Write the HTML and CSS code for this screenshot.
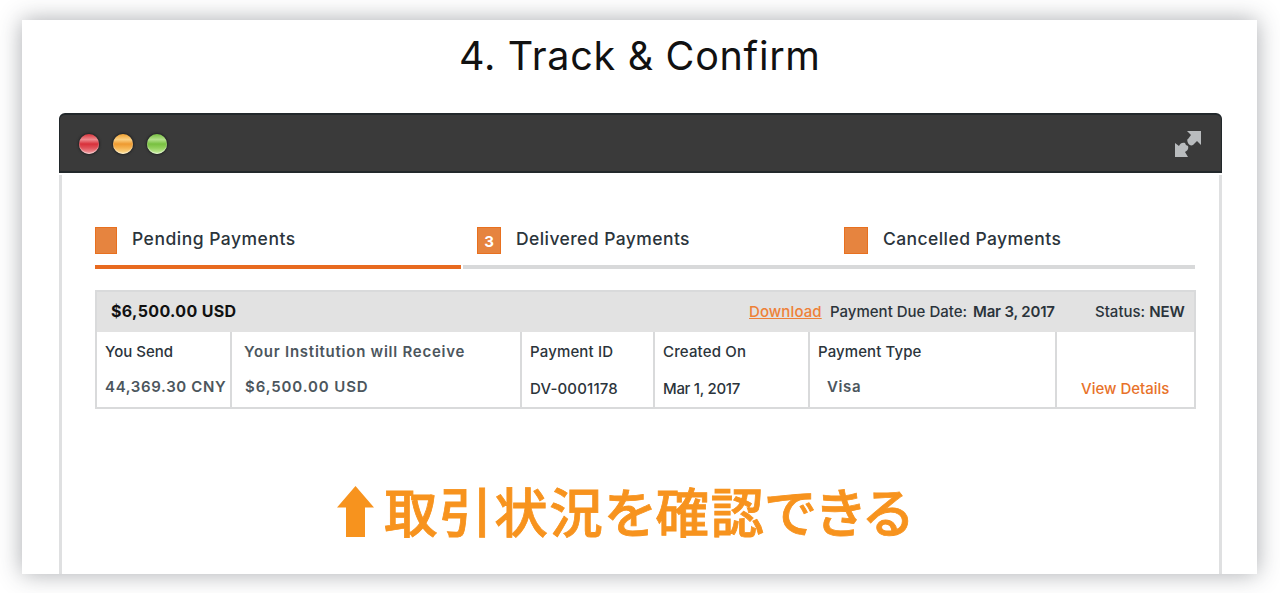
FILE: index.html
```html
<!DOCTYPE html>
<html lang="ja">

<head>
    <meta charset="UTF-8">
    <meta name="viewport" content="width=device-width, initial-scale=1.0">
    <title>Track &amp; Confirm</title>
    <link rel="stylesheet" href="styles.css">
</head>

<body>
    <div class="card">
        <h1 class="title">4. Track &amp; Confirm</h1>

        <div class="window">
            <!-- Title bar -->
            <div class="titlebar">
                <div class="lights">
                    <span class="light red"></span>
                    <span class="light yellow"></span>
                    <span class="light green"></span>
                </div>
                <svg class="expand" width="28" height="28" viewBox="0 0 28 28">
                    <path d="M13 1H27V15L23 11L19 15C17 16 15 15 14 13C13 11 13 9 14 9L17 5Z" />
                    <path d="M1 13L5 16C6 13 9 12 11 13L12 15L14 16C15 19 13 21 11 22L14 27H1Z" />
                </svg>
            </div>

            <div class="content">
                <!-- Tabs -->
                <div class="tabs">
                    <div class="tab active">
                        <span class="count"></span>
                        <span class="tab-name pending">Pending Payments</span>
                    </div>
                    <div class="tab delivered-tab">
                        <span class="count wide">3</span>
                        <span class="tab-name">Delivered Payments</span>
                    </div>
                    <div class="tab cancelled-tab">
                        <span class="count wide"></span>
                        <span class="tab-name">Cancelled Payments</span>
                    </div>
                </div>

                <!-- Payment -->
                <div class="payment">
                    <div class="payment-head">
                        <span class="amount">$6,500.00 USD</span>
                        <a class="download">Download</a>
                        <span class="due">Payment Due Date: <b>Mar 3, 2017</b></span>
                        <span class="status">Status: <b>NEW</b></span>
                    </div>
                    <div class="payment-row">
                        <div class="cell send">
                            <span class="name">You Send</span>
                            <span class="value gray">44,369.30 CNY</span>
                        </div>
                        <div class="cell receive">
                            <span class="name gray">Your Institution will Receive</span>
                            <span class="value gray">$6,500.00 USD</span>
                        </div>
                        <div class="cell payment-id">
                            <span class="name">Payment ID</span>
                            <span class="value low">DV-0001178</span>
                        </div>
                        <div class="cell created">
                            <span class="name">Created On</span>
                            <span class="value low">Mar 1, 2017</span>
                        </div>
                        <div class="cell type">
                            <span class="name">Payment Type</span>
                            <span class="value gray">Visa</span>
                        </div>
                        <div class="cell details">
                            <a class="value low">View Details</a>
                        </div>
                    </div>
                </div>

                <div class="note">
                    <svg class="arrow" width="38" height="51" viewBox="0 0 38 51">
                        <path d="M18.500 0L37 21.500H28V51H9V21.500H0Z" />
                    </svg>
                    <span class="note-text">取引状況を確認できる</span>
                </div>
            </div>
        </div>
    </div>
</body>

</html>
```
FILE: styles.css
```css
* {
    box-sizing: border-box;
}

body {
    margin: 0;
    height: 593px;
    padding: 20px 23px 19px 22px;
    overflow: hidden;
    background-color: #fff;
    font-family: Inter, "Noto Sans CJK JP", sans-serif;
    color: #2b343b;
}

.card {
    display: flex;
    flex-direction: column;
    height: 554px;
    background-color: #fff;
    box-shadow: 0 0 22px rgba(50, 55, 65, 0.42);
}

.title {
    margin: 0;
    height: 93px;
    padding-left: 437px;
    line-height: 73px;
    font-size: 39.5px;
    font-weight: 400;
    letter-spacing: 0.7px;
    color: #111;
    white-space: nowrap;
}

.window {
    flex: 1;
    display: flex;
    flex-direction: column;
    margin: 0 35px 0 37px;
}

.titlebar {
    display: flex;
    align-items: center;
    justify-content: space-between;
    height: 60px;
    margin-bottom: 2px;
    padding: 1px 19px 0 20px;
    background-color: #3a3a3a;
    border: 2px solid #22282b;
    border-width: 2px 1px;
    border-radius: 6px 6px 0 0;
}

.lights {
    display: flex;
    gap: 14px;
    margin-left: -1px;
}

.light {
    width: 20px;
    height: 20px;
    border-radius: 50%;
    box-shadow: 0 0 2px 1px #242526, inset 0 -1px 1px rgba(255, 255, 255, 0.55);
}

.red {
    background: linear-gradient(#d8323a 0, #ee8a8e 28%, #d8303a 50%, #e0525a 70%, #f4a4a8 100%);
}

.yellow {
    background: linear-gradient(#f0a030 0, #fbcf80 28%, #ee9a30 50%, #f5b350 70%, #ffe39a 100%);
}

.green {
    background: linear-gradient(#76bd40 0, #b2e08a 28%, #78c040 50%, #92d05c 70%, #ccf0a4 100%);
}

.expand {
    fill: #b9bcbe;
}

.content {
    flex: 1;
    padding: 52px 23px 0 33px;
    border: 3px solid #dfe0e1;
    border-width: 0 3px;
}

.tabs {
    display: flex;
    gap: 2px;
    width: 1100px;
    height: 42px;
}

.tab {
    display: flex;
    align-items: flex-start;
    border-bottom: 4px solid #d8d9da;
}

.active {
    width: 366px;
    border-color: #e86a20;
}

.delivered-tab {
    width: 367px;
    padding-left: 14px;
    margin-right: -2px;
}

.cancelled-tab {
    flex: 1;
    padding-left: 14px;
}

.count {
    width: 22px;
    height: 27px;
    margin-right: 16px;
    border: 1px solid #e8701f;
    background-color: #e6843f;
    color: #fff;
    font-size: 15px;
    font-weight: 700;
    line-height: 28px;
    text-align: center;
}

.wide {
    width: 24px;
    margin-right: 15px;
}

.tab-name {
    line-height: 24px;
    font-size: 17.5px;
    font-weight: 500;
    letter-spacing: 0.42px;
    white-space: nowrap;
}

.pending {
    margin-left: -1px;
    letter-spacing: 0.5px;
}

.payment {
    width: 1101px;
    height: 119px;
    margin-top: 21px;
    border: 2px solid #d9dadb;
}

.payment-head {
    display: flex;
    height: 40px;
    padding-left: 14px;
    line-height: 40px;
    font-size: 15px;
    font-weight: 500;
    white-space: nowrap;
    background-color: #e2e2e2;
}

.payment-head b {
    font-weight: 600;
}

.due b {
    margin-left: 2px;
    letter-spacing: -0.2px;
}

.amount {
    width: 638px;
    line-height: 38px;
    font-size: 16px;
    font-weight: 700;
    letter-spacing: 0.35px;
    color: #111;
}

.download {
    width: 81px;
    letter-spacing: 0.1px;
    color: #ee8038;
    text-decoration: underline;
}

.due {
    width: 265px;
}

.payment-row {
    display: flex;
    height: 75px;
}

.cell {
    display: flex;
    flex-direction: column;
    padding: 10px 0 0 8px;
    border-right: 2px solid #d9dadb;
    font-size: 15px;
    font-weight: 500;
    line-height: 20px;
    white-space: nowrap;
}

.value {
    margin-top: 15px;
}

.low {
    margin-top: 17px;
}

.gray {
    color: #4c565d;
    font-weight: 600;
}

.send {
    width: 135px;
}

.send .value {
    letter-spacing: 0.65px;
}

.receive {
    width: 290px;
    padding-left: 12px;
    letter-spacing: 0.75px;
}

.receive .value {
    padding-left: 1px;
    letter-spacing: 0.9px;
}

.payment-id {
    width: 133px;
    letter-spacing: 0.15px;
}

.created {
    width: 155px;
    letter-spacing: 0.15px;
}

.created .value {
    letter-spacing: -0.3px;
}

.type {
    width: 247px;
    letter-spacing: 0.1px;
}

.type .value {
    padding-left: 9px;
    letter-spacing: 0.6px;
}

.details {
    flex: 1;
    padding: 30px 0 0 24px;
    border-right: none;
    color: #e8722a;
}

.note {
    display: flex;
    align-items: center;
    height: 80px;
    margin-top: 62px;
    padding-left: 242px;
    color: #f7931e;
}

.arrow {
    fill: #f7931e;
    margin-right: 9px;
}

.note-text {
    font-family: "Noto Sans CJK JP", sans-serif;
    font-size: 53.5px;
    font-weight: 500;
    line-height: 76px;
    letter-spacing: 1.6px;
    margin-top: -3px;
    font-feature-settings: "palt";
    -webkit-text-stroke: 0.8px #f7931e;
    white-space: nowrap;
}
```
